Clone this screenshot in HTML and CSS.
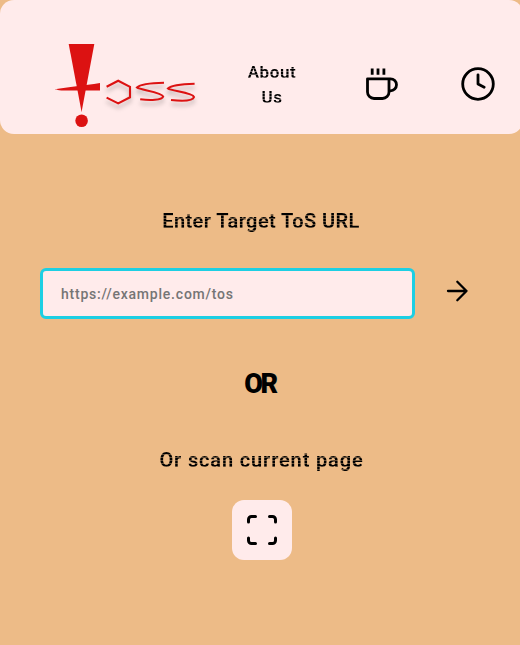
FILE: index.html
```html
<!DOCTYPE html>
<html lang="en">
<head>
<meta charset="utf-8">
<title>Toss</title>
<link rel="stylesheet" href="styles.css">
</head>
<body>
<header class="navbar">
  <svg class="logo" width="150" height="90" viewBox="0 0 150 90" role="img" aria-label="Toss">
    <g fill="#dc1212">
      <path d="M18.7 4H44.3L31.6 72Z"/>
      <path d="M5 49.2C18 47 34 45.5 50 43V50.5H19C11 50.5 6 50.2 5 49.2Z"/>
      <circle cx="31.6" cy="80.8" r="6.3"/>
    </g>
    <g class="logo-strokes" fill="none" stroke="#dc1212" stroke-width="2.1">
      <path d="M56.600 46.800L68.200 40.700L80 46.800V57.300L68.200 63.400L56.600 57.600"/>
      <path d="M114 42.800C103 43 90 44.500 87 47.500C90 50 112 52 113.200 56.500C112 60.300 100 60.500 90.200 59.300"/>
      <path d="M144.600 43.700C134 44 121 45.500 118 48.500C121 51 143 52.500 144 57C143 61 131 61 121 60"/>
    </g>
  </svg>
  <a class="about"><span class="striped">About</span><span class="striped">Us</span></a>
  <svg class="cup" width="36" height="36" viewBox="0 0 36 36" fill="none" stroke="#000" stroke-width="2.8" stroke-linejoin="round">
    <path d="M3.500 12.800H25V26A6.500 6.500 0 0 1 18.500 32.500H10A6.500 6.500 0 0 1 3.500 26ZM25 12.800H26.500A6 6 0 0 1 26.500 24.800H25"/>
    <path d="M8.200 2.500V8.700M14 2.500V8.700M19.900 2.500V8.700"/>
  </svg>
  <svg class="clock" width="36" height="36" viewBox="0 0 36 36" fill="none" stroke="#000" stroke-width="2.8" stroke-linecap="round" stroke-linejoin="round">
    <circle cx="18" cy="18" r="15.300"/>
    <path d="M18 8.800V18L24.200 21.200"/>
  </svg>
</header>
<main class="content">
  <h2 class="label url-label striped">Enter Target ToS URL</h2>
  <form class="url-form">
    <input class="url-input" type="text" placeholder="https://example.com/tos" aria-label="URL">
    <button class="submit" type="button" aria-label="Submit">
      <svg width="24" height="24" viewBox="0 0 24 24" fill="none" stroke="#000" stroke-width="2.300" stroke-linecap="round" stroke-linejoin="round"><path d="M3 12H21.500M12.300 2.800L21.500 12L12.300 21.200"/></svg>
    </button>
  </form>
  <h1 class="divider">OR</h1>
  <h2 class="label scan-label striped">Or scan current page</h2>
  <button class="scan" type="button" aria-label="Scan page">
    <svg width="34" height="34" viewBox="0 0 34 34" fill="none" stroke="#000" stroke-width="3" stroke-linecap="round" stroke-linejoin="round"><path d="M3.500 9V6.500A3 3 0 0 1 6.500 3.500H10.500M24.500 3.500H27.500A3 3 0 0 1 30.500 6.500V9M30.500 25V27.500A3 3 0 0 1 27.500 30.500H24.500M10.500 30.500H6.500A3 3 0 0 1 3.500 27.500V25"/></svg>
  </button>
</main>
</body>
</html>
```
FILE: styles.css
```css
* { box-sizing: border-box; }
body {
  margin: 0;
  min-height: 645px;
  overflow: hidden;
  background: #edbb87;
  color: #000;
  font-family: Roboto, "Liberation Sans", sans-serif;
}
.navbar {
  display: flex;
  width: 523px;
  height: 134px;
  padding: 40px 0 0 50px;
  background: #ffebeb;
  border-radius: 14px;
}
.logo { flex: none; }
.logo-strokes { filter: drop-shadow(0 4px 2px rgba(0, 0, 0, 0.25)); }
/* Scanline lettering */
.striped {
  background: repeating-linear-gradient(#000 0 2px, rgba(0, 0, 0, 0.6) 2px 3px);
  -webkit-background-clip: text;
  background-clip: text;
  color: transparent;
}
.about {
  display: flex;
  flex-direction: column;
  align-items: center;
  width: 60px;
  margin: 20px 0 0 42px;
  font-size: 17px;
  font-weight: 600;
  line-height: 25px;
  letter-spacing: 0.6px;
}
.cup { flex: none; margin: 26px 0 0 62px; }
.clock { flex: none; margin: 26px 0 0 60px; }
.content {
  display: flex;
  flex-direction: column;
  align-items: center;
}
.label {
  margin: 0;
  font-size: 20px;
  font-weight: 600;
  line-height: 28px;
  white-space: nowrap;
}
.url-label { margin: 73px 0 0 2px; letter-spacing: 0.400px; }
.url-form {
  display: flex;
  align-items: center;
  width: 440px;
  height: 51px;
  margin-top: 33px;
}
.url-input {
  width: 375px;
  height: 51px;
  padding: 0 18px;
  border: 3px solid #1dcfe3;
  border-radius: 6px;
  outline: none;
  background: #ffebeb;
  font: 500 14px Roboto, "Liberation Sans", sans-serif;
  letter-spacing: 0.780px;
}
.url-input::placeholder { color: #757575; }
.submit {
  display: flex;
  margin: 0 0 5px 30px;
  padding: 0;
  border: 0;
  background: none;
}
.divider {
  margin: 47px 0 0;
  font-size: 27px;
  font-weight: 900;
  line-height: 36px;
  letter-spacing: -2.500px;
}
.scan-label { margin: 44px 0 0 3px; letter-spacing: 0.850px; }
.scan {
  display: flex;
  align-items: center;
  justify-content: center;
  width: 60px;
  height: 60px;
  margin: 26px 0 0 4px;
  padding: 0;
  border: 0;
  border-radius: 12px;
  background: #ffebeb;
}
```
